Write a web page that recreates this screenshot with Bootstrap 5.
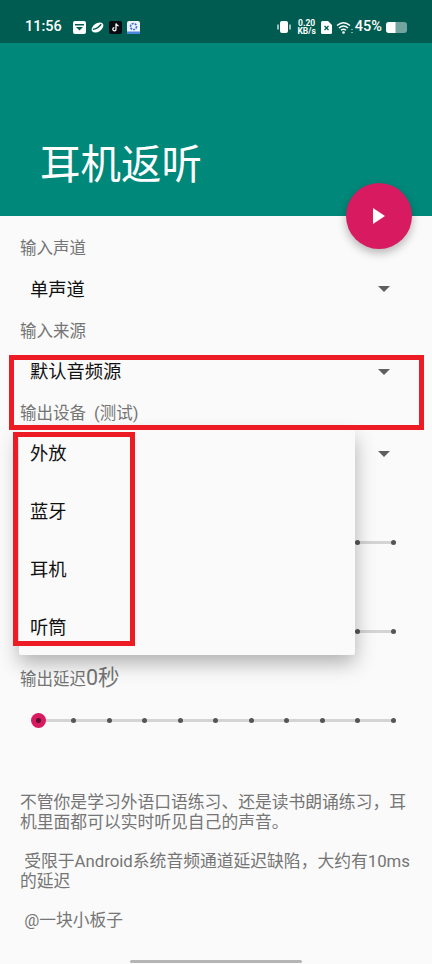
<!DOCTYPE html>
<html lang="zh">
<head>
    <meta charset="UTF-8">
    <title>耳机返听</title>
    <link href="https://cdn.jsdelivr.net/npm/bootstrap@5.3.0/dist/css/bootstrap.min.css" rel="stylesheet">
    <style>
        html, body { height: 100%; }
        body {
            background: #fafafa;
            font-family: Roboto, "Noto Sans CJK SC", sans-serif;
            overflow: hidden;
        }
        #screen { position: relative; width: 432px; height: 964px; overflow: hidden; background: #fafafa; }
        #status-bar { height: 43px; background: #005c50; color: #fff; padding: 11px 24px 0 25px; }
        #clock { font-size: 14.5px; font-weight: 500; margin-right: 6px; }
        #status-left { gap: 5px; }
        #net { font-size: 8.5px; line-height: 8.5px; font-weight: 700; text-align: center; margin: 0 5px 0 6px; }
        #battery-pct { font-size: 14.5px; font-weight: 500; margin: 0 4px 0 2px; }
        #app-header { height: 173px; background: #00887a; padding: 98px 0 0 40px; }
        #app-header h1 { font-size: 40.5px; line-height: 48px; font-weight: 400; color: #fff; margin: 0; }
        #fab {
            position: absolute; left: 346px; top: 183px; width: 66px; height: 66px;
            border: 0; border-radius: 50%; background: #d81b60;
            box-shadow: 0 4px 10px rgba(0, 0, 0, .28);
        }
        #form-area { padding: 22px 0 0 20px; }
        .field-label { font-size: 16.5px; line-height: 22px; color: #757575; height: 22px; word-spacing: 4px; }
        .picker { height: 60.5px; padding: 0 42px 2px 10px; font-size: 18.3px; color: #111; }
        .picker-caret { width: 0; height: 0; border-left: 6px solid transparent; border-right: 6px solid transparent; border-top: 6px solid #5f5f5f; }
        .seek-row { position: relative; height: 36px; width: 376px; padding-left: 15.5px; }
        .seek-rail { position: absolute; left: 18px; right: 2.5px; top: 16.5px; height: 3px; background: #d4d4d4; }
        .seek-tick { position: relative; width: 5px; height: 5px; border-radius: 50%; background: #555; }
        .seek-thumb { position: absolute; left: 10.5px; top: 10.5px; width: 15px; height: 15px; border-radius: 50%; background: #d81b60; }
        .seek-thumb::after { content: ""; position: absolute; left: 5px; top: 5px; width: 5px; height: 5px; border-radius: 50%; background: #5c1034; }
        #seek-rate { margin-top: 38.5px; }
        #seek-buffer { margin-top: 53px; }
        #delay-label { margin-top: 18px; }
        #delay-label span { font-size: 21.5px; }
        #delay-seek { z-index: 3; background: #fafafa; width: 396px; height: 54px; margin: 4px 0 0 -20px; padding: 0 .5px 0 35.5px; }
        #delay-seek .seek-rail { left: 38px; right: 2.5px; top: 25.5px; }
        #delay-seek .seek-thumb { left: 30.5px; top: 19.5px; }
        #about { position: relative; z-index: 3; width: 396px; font-size: 16.8px; line-height: 19.5px; color: #757575; margin-top: 46px; }
        #about p { margin: 0 0 20px; }
        #menu {
            position: absolute; left: 19px; top: 430px; width: 336px; height: 225px; z-index: 2;
            background: #fafafa; border-radius: 2px; gap: 12px; padding-top: 1px;
            box-shadow: 0 8px 20px rgba(0, 0, 0, .3);
        }
        #menu .menu-item { height: 46px; padding-left: 11px; font-size: 18.3px; color: #111; }
        .red-box { position: absolute; z-index: 4; border: 5px solid #ed1c24; pointer-events: none; }
        #red-wide { left: 9px; top: 355px; width: 415px; height: 75px; }
        #red-items { left: 13px; top: 432px; width: 122px; height: 214px; }
        #home-bar { position: absolute; left: 130px; top: 960px; width: 172px; height: 3px; background: #b5b5b5; border-radius: 2px; }
    </style>
</head>
<body>
<div id="screen">
    <!-- barre d'etat -->
    <div id="status-bar" class="d-flex align-items-center justify-content-between">
        <div id="status-left" class="d-flex align-items-center">
            <span id="clock">11:56</span>
            <svg width="13" height="13" viewBox="0 0 13 13"><rect width="13" height="13" rx="2" fill="#fff"/><rect x="2" y="3" width="9" height="1.500" fill="#005c50"/><path d="M3 6h7L6.500 9.500z" fill="#005c50"/></svg>
            <svg width="13" height="13" viewBox="0 0 14 13"><ellipse cx="7" cy="6.500" rx="7" ry="4.500" transform="rotate(-35 7 6.500)" fill="#fff"/><path d="M2 8.500Q7 8 11 3" stroke="#005c50" stroke-width="1.500" fill="none"/></svg>
            <svg width="13" height="13" viewBox="0 0 13 13"><rect width="13" height="13" rx="2" fill="#0b0b12"/><path d="M7 2.500v5.700a1.600 1.600 0 1 1-1.600-1.600M7 2.500q.4 2 2.600 2.300" stroke="#fff" stroke-width="1.300" fill="none"/></svg>
            <svg width="13" height="13" viewBox="0 0 13 13"><rect width="13" height="13" rx="2" fill="#eef3fb"/><circle cx="6.500" cy="5.500" r="3" fill="none" stroke="#3d6fd0" stroke-width="1.600" stroke-dasharray="2 1"/><rect y="10.500" width="13" height="2.500" fill="#4a86dd"/></svg>
        </div>
        <div class="d-flex align-items-center">
            <svg width="14" height="14" viewBox="0 0 14 14"><rect x="3" y="1" width="8" height="12" rx="2" fill="#fff"/><path d="M1 4.500v5M13 4.500v5" stroke="#fff" stroke-width="1.200"/></svg>
            <div id="net">0.20<br>KB/s</div>
            <svg width="11" height="13" viewBox="0 0 11 13"><path d="M0 1.500A1.500 1.500 0 0 1 1.500 0H7l4 4v7.500A1.500 1.500 0 0 1 9.500 13h-8A1.500 1.500 0 0 1 0 11.500z" fill="#fff"/><path d="M3.500 5l4 4M7.500 5l-4 4" stroke="#005c50" stroke-width="1.300"/></svg>
            <svg width="17" height="13" viewBox="0 0 17 13" class="ms-1"><path d="M1 4.500Q7.500-1 14 4.500M3 7Q7.500 3 12 7M5 9.300Q7.500 7.300 10 9.300" stroke="#fff" stroke-width="1.400" fill="none"/><circle cx="7.500" cy="11.500" r="1.300" fill="#fff"/><path d="M16 8v1M16 11v1" stroke="#fff"/></svg>
            <span id="battery-pct">45%</span>
            <svg width="22" height="11" viewBox="0 0 22 11"><rect width="21" height="11" rx="3" fill="#fff" fill-opacity=".45"/><path d="M3 0h6.500v11H3a3 3 0 0 1-3-3V3a3 3 0 0 1 3-3z" fill="#fff"/></svg>
        </div>
    </div>

    <div id="app-header"><h1>耳机返听</h1></div>

    <button id="fab" class="btn d-flex align-items-center justify-content-center p-0" type="button">
        <svg width="12" height="16" viewBox="0 0 12 16"><path d="M0 0l12 8-12 8z" fill="#fff"/></svg>
    </button>

    <div id="form-area">
        <div class="field-label">输入声道</div>
        <div class="picker d-flex align-items-center justify-content-between"><span>单声道</span><i class="picker-caret"></i></div>
        <div class="field-label">输入来源</div>
        <div class="picker d-flex align-items-center justify-content-between"><span>默认音频源</span><i class="picker-caret"></i></div>
        <div class="field-label">输出设备 (测试)</div>
        <div class="picker d-flex align-items-center justify-content-end"><i class="picker-caret"></i></div>

        <div id="seek-rate" class="seek-row d-flex align-items-center justify-content-between" data-seek></div>
        <div id="seek-buffer" class="seek-row d-flex align-items-center justify-content-between" data-seek></div>
        <div id="delay-label" class="field-label">输出延迟<span>0秒</span></div>
        <div id="delay-seek" class="seek-row d-flex align-items-center justify-content-between" data-seek></div>

        <div id="about">
            <p>不管你是学习外语口语练习、还是读书朗诵练习，耳机里面都可以实时听见自己的声音。</p>
            <p>&nbsp;受限于Android系统音频通道延迟缺陷，大约有10ms的延迟</p>
            <p>&nbsp;@一块小板子</p>
        </div>
    </div>

    <!-- menu deroulant ouvert -->
    <div id="menu" class="d-flex flex-column">
        <div class="menu-item d-flex align-items-center">外放</div>
        <div class="menu-item d-flex align-items-center">蓝牙</div>
        <div class="menu-item d-flex align-items-center">耳机</div>
        <div class="menu-item d-flex align-items-center">听筒</div>
    </div>

    <div id="red-wide" class="red-box"></div>
    <div id="red-items" class="red-box"></div>
    <div id="home-bar"></div>
</div>

<script src="https://cdn.jsdelivr.net/npm/bootstrap@5.3.0/dist/js/bootstrap.bundle.min.js"></script>
<script>
    document.querySelectorAll('[data-seek]').forEach(function (row) {
        row.innerHTML = '<div class="seek-rail"></div>';
        for (let i = 0; i < 11; i++) {
            const tick = document.createElement('div');
            tick.className = 'seek-tick';
            row.appendChild(tick);
        }
        const thumb = document.createElement('div');
        thumb.className = 'seek-thumb';
        row.appendChild(thumb);
    });
</script>
</body>
</html>
